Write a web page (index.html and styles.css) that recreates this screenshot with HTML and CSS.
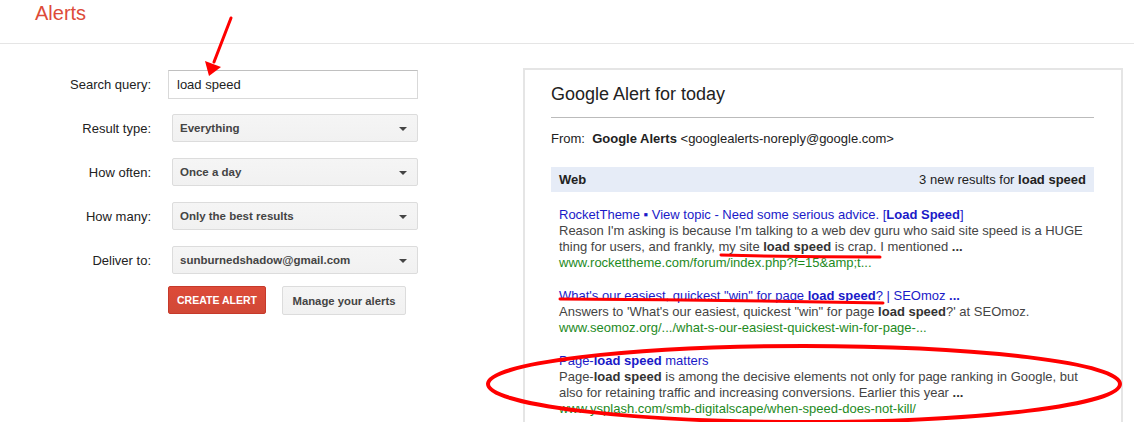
FILE: index.html
```html
<!DOCTYPE html>
<html lang="en">

<head>
    <meta charset="UTF-8">
    <title>Alerts</title>
    <link rel="stylesheet" href="styles.css">
</head>

<body>
    <header class="topbar">
        <span class="brand">Alerts</span>
    </header>

    <main class="page">
        <section class="alert-form">
            <div class="fields">
                <label class="field-label">Search query:</label>
                <input class="text-input" type="text" value="load speed">

                <label class="field-label">Result type:</label>
                <div class="select">Everything</div>

                <label class="field-label">How often:</label>
                <div class="select">Once a day</div>

                <label class="field-label">How many:</label>
                <div class="select">Only the best results</div>

                <label class="field-label">Deliver to:</label>
                <div class="select">sunburnedshadow@gmail.com</div>
            </div>
            <div class="actions">
                <button class="btn btn-red">CREATE ALERT</button>
                <button class="btn btn-grey">Manage your alerts</button>
            </div>
        </section>

        <section class="preview">
            <h2 class="preview-title">Google Alert for today</h2>
            <p class="from">From:&nbsp; <b>Google Alerts</b> &lt;googlealerts-noreply@google.com&gt;</p>

            <div class="section-bar">
                <b>Web</b>
                <span>3 new results for <b>load speed</b></span>
            </div>

            <div class="result">
                <a class="result-title">RocketTheme ▪ View topic - Need some serious advice. [<b>Load Speed</b>]</a>
                <p class="snippet">Reason I'm asking is because I'm talking to a web dev guru who said site speed is a HUGE<br>
                    thing for users, and frankly, my site <b>load speed</b> is crap. I mentioned <b>...</b></p>
                <p class="url">www.rockettheme.com/forum/index.php?f=15&amp;amp;t...</p>
            </div>

            <div class="result">
                <a class="result-title">What's our easiest, quickest "win" for page <b>load speed</b>? | SEOmoz <b>...</b></a>
                <p class="snippet">Answers to 'What's our easiest, quickest "win" for page <b>load speed</b>?' at SEOmoz.</p>
                <p class="url">www.seomoz.org/.../what-s-our-easiest-quickest-win-for-page-...</p>
            </div>

            <div class="result">
                <a class="result-title">Page-<b>load speed</b> matters</a>
                <p class="snippet">Page-<b>load speed</b> is among the decisive elements not only for page ranking in Google, but<br>
                    also for retaining traffic and increasing conversions. Earlier this year <b>...</b></p>
                <p class="url">www.ysplash.com/smb-digitalscape/when-speed-does-not-kill/</p>
            </div>
        </section>
    </main>

    <!-- red marker drawn over the screenshot -->
    <svg class="marks" width="1134" height="422" viewBox="0 0 1134 422">
        <g stroke="#f00" fill="none" stroke-linecap="round">
            <line x1="231" y1="18" x2="214" y2="62" stroke-width="3" />
            <path d="M721 255 Q800 257 880 257" stroke-width="3" />
            <path d="M560 299 Q720 300 883 303" stroke-width="3" />
            <ellipse cx="804" cy="384" rx="316" ry="38" stroke-width="4" />
        </g>
        <polygon points="205,61 221,67 209,76" fill="#f00" />
    </svg>
</body>

</html>
```

FILE: styles.css
```css
* {
    margin: 0;
    padding: 0;
    box-sizing: border-box;
}

html,
body {
    overflow: hidden;
}

body {
    position: relative;
    font-family: "Liberation Sans", Arial, sans-serif;
    color: #222;
    background: #fff;
}

.topbar {
    height: 44px;
    padding-left: 35px;
    border-bottom: 1px solid #e5e5e5;
}

.brand {
    font-size: 20px;
    line-height: 26px;
    color: #dd4b39;
}

.page {
    display: flex;
}

/* left side form */
.alert-form {
    width: 523px;
    padding-top: 26px;
}

.fields {
    display: grid;
    grid-template-columns: 151px 250px;
    grid-auto-rows: 29px;
    column-gap: 17px;
    row-gap: 15px;
}

.field-label {
    align-self: center;
    text-align: right;
    font-size: 13px;
    color: #222;
}

.text-input {
    width: 250px;
    height: 29px;
    padding: 0 8px;
    border: 1px solid #d9d9d9;
    border-top-color: #c0c0c0;
    font-family: inherit;
    font-size: 13px;
    color: #222;
    outline: none;
}

.select {
    position: relative;
    width: 246px;
    height: 28px;
    margin-left: 4px;
    padding-left: 7px;
    border: 1px solid #dcdcdc;
    border-radius: 2px;
    background: linear-gradient(#f5f5f5, #f1f1f1);
    font-size: 11.5px;
    font-weight: bold;
    line-height: 26px;
    color: #444;
}

.select::after {
    content: "";
    position: absolute;
    right: 10px;
    top: 12px;
    border-style: solid;
    border-width: 4px 4px 0 4px;
    border-color: #444 transparent transparent transparent;
}

.actions {
    display: flex;
    gap: 16px;
    margin-top: 11px;
    padding-left: 168px;
}

.btn {
    height: 29px;
    border-radius: 2px;
    font-family: inherit;
    font-size: 11px;
    font-weight: bold;
}

.btn-red {
    width: 98px;
    height: 28px;
    background: linear-gradient(#dd4b39, #d14836);
    border: 1px solid #c6392a;
    color: #fff;
    font-size: 10.5px;
}

.btn-grey {
    width: 124px;
    background: linear-gradient(#f5f5f5, #f1f1f1);
    border: 1px solid #dcdcdc;
    color: #444;
    font-size: 11.3px;
}

/* right side preview */
.preview {
    width: 600px;
    margin-top: 24px;
    padding: 0 27px 40px 26px;
    border: 2px solid #e5e5e5;
    border-bottom: none;
}

.preview-title {
    margin-top: 14px;
    padding-bottom: 13px;
    border-bottom: 1px solid #bbb;
    font-size: 18px;
    font-weight: normal;
    line-height: 20px;
    color: #222;
}

.from {
    margin-top: 13px;
    font-size: 13px;
    line-height: 16px;
}

.section-bar {
    display: flex;
    justify-content: space-between;
    align-items: center;
    height: 25px;
    margin-top: 20px;
    padding: 0 8px;
    background: #e6ecf7;
    font-size: 13px;
}

.result {
    padding-left: 8px;
    margin-top: 15px;
    font-size: 13px;
    line-height: 16px;
}

.result + .result {
    margin-top: 17px;
}

.result-title {
    color: #1a1ac8;
}

.snippet {
    color: #444;
}

.snippet b {
    color: #333;
}

.url {
    color: #1e8a1e;
}

.marks {
    position: absolute;
    top: 0;
    left: 0;
    pointer-events: none;
}
```
